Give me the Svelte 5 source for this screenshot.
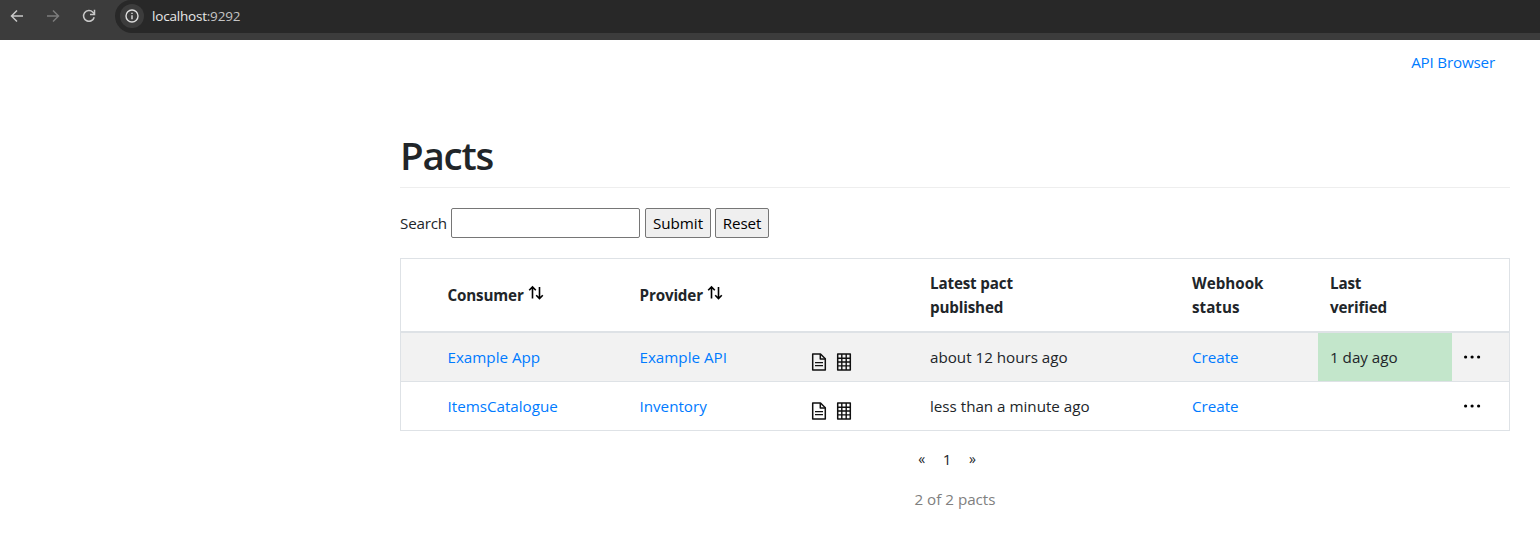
<script>
  const rows = [
    { consumer: 'Example App', provider: 'Example API', published: 'about 12 hours ago', verified: '1 day ago' },
    { consumer: 'ItemsCatalogue', provider: 'Inventory', published: 'less than a minute ago', verified: '' }
  ];
</script>

{#snippet sortIcon()}
  <svg class="sort" width="16" height="16" viewBox="0 0 16 16" fill="none" stroke="#000" stroke-width="1.6">
    <path d="M4.500 13.500V2.200M1.200 5.300 4.500 2l3.300 3.300M11.500 2v11.300M8.200 10.200l3.300 3.300 3.300-3.300" />
  </svg>
{/snippet}

<div class="browser">
  <svg class="nav back" width="14" height="14" viewBox="0 0 14 14"><path d="M13 7H1.800M7 1.500 1.500 7 7 12.500" /></svg>
  <svg class="nav forward" width="14" height="14" viewBox="0 0 14 14"><path d="M1 7h11.200M7 1.500 12.500 7 7 12.500" /></svg>
  <svg class="nav reload" width="14" height="14" viewBox="0 0 14 14">
    <path d="M12.200 8.200A5.400 5.400 0 1 1 10.900 3.200L12.300 4.600" /><path d="M12.500 .8V5.400H8" />
  </svg>
  <div class="address">
    <span class="info">
      <svg width="14" height="14" viewBox="0 0 14 14" fill="none" stroke="#dedede" stroke-width="1.4">
        <circle cx="7" cy="7" r="6" /><path d="M7 6.200v4M7 3.700v1.400" />
      </svg>
    </span>
    <span class="url">localhost<span class="port">:9292</span></span>
  </div>
</div>

<nav class="top"><a href="#api">API Browser</a></nav>

<main>
  <h1>Pacts</h1>
  <form onsubmit={(e) => e.preventDefault()}>
    <label for="search">Search</label>
    <input id="search" type="text" />
    <button class="submit" type="submit">Submit</button>
    <button class="reset" type="reset">Reset</button>
  </form>

  <table>
    <colgroup>
      <col class="c0" /><col class="c1" /><col class="c2" /><col class="c3" />
      <col class="c4" /><col class="c5" /><col class="c6" /><col class="c7" />
    </colgroup>
    <thead>
      <tr>
        <th></th>
        <th>Consumer {@render sortIcon()}</th>
        <th>Provider {@render sortIcon()}</th>
        <th></th>
        <th>Latest pact<br />published</th>
        <th class="webhook">Webhook<br />status</th>
        <th>Last<br />verified</th>
        <th></th>
      </tr>
    </thead>
    <tbody>
      {#each rows as row}
        <tr>
          <td></td>
          <td><a href="#consumer">{row.consumer}</a></td>
          <td><a href="#provider">{row.provider}</a></td>
          <td>
            <div class="icons">
              <svg width="16" height="18" viewBox="0 0 16 18" fill="none" stroke="#111" stroke-width="1.5" stroke-linejoin="round">
                <path d="M1.700 1H9.500L14.300 5.800V17H1.700Z" /><path d="M9.300 1V6H14.300" />
                <path d="M4 9.600h8M4 12.600h8" stroke-width="1.400" />
              </svg>
              <svg width="16" height="18" viewBox="0 0 16 18" fill="none" stroke="#111" stroke-width="1.5" stroke-linejoin="round">
                <path d="M1.700 1H14.300V17H1.700Z" /><path d="M5.800 1v16M10.200 1v16M1.700 5.200h12.600M1.700 9h12.600M1.700 12.900h12.600" stroke-width="1.400" />
              </svg>
            </div>
          </td>
          <td>{row.published}</td>
          <td><a href="#create">Create</a></td>
          <td class:success={row.verified}>{row.verified}</td>
          <td>
            <svg class="more" width="18" height="4" viewBox="0 0 18 4" fill="#000">
              <circle cx="1.600" cy="2" r="1.600" /><circle cx="8.100" cy="2" r="1.600" /><circle cx="14.600" cy="2" r="1.600" />
            </svg>
          </td>
        </tr>
      {/each}
    </tbody>
  </table>

  <div class="pages"><span class="step">«</span><span>1</span><span class="step">»</span></div>
  <div class="count">2 of 2 pacts</div>
</main>

<style>
  :global(body) {
    margin: 0;
    background: #fff;
    color: #212529;
    font: 15.200px/24px "Open Sans", "Noto Sans", sans-serif;
    letter-spacing: -0.01px;
    overflow: hidden;
  }
  a { color: #007bff; text-decoration: none; }
  .browser {
    display: flex;
    height: 40px;
    background: #3c3c3c;
  }
  .nav {
    flex: none;
    margin-top: 9px;
    fill: none;
    stroke: #c8c8c8;
    stroke-width: 1.500;
  }
  .back { margin-left: 10px; }
  .forward { margin-left: 22px; stroke: #7c7c7c; }
  .reload { margin-left: 22px; }
  .address {
    flex: 1;
    display: flex;
    align-items: flex-start;
    box-sizing: border-box;
    height: 33px;
    margin-left: 19px;
    padding: 4px 0 0 5px;
    border-radius: 16px 0 0 17px;
    background: #282828;
  }
  .info {
    display: flex;
    align-items: center;
    justify-content: center;
    width: 24px;
    height: 24px;
    border-radius: 50%;
    background: #3c3c3c;
  }
  .url { margin-left: 8px; color: #e8e8e8; font-size: 13.500px; letter-spacing: -0.200px; }
  .port { color: #c4c4c4; }
  .top { padding: 10px 45px 0 0; text-align: right; letter-spacing: -0.180px; }
  main { margin: 60px 30px 0 400px; }
  h1 {
    margin: 0 0 20px;
    height: 53px;
    border-bottom: 1px solid #eee;
    font-size: 38.500px;
    font-weight: 600;
    line-height: 42px;
    letter-spacing: -1.200px;
  }
  form { display: flex; align-items: center; height: 30px; margin-bottom: 20px; }
  input {
    box-sizing: border-box;
    width: 189px;
    height: 30px;
    padding: 0;
    border: 1px solid #767676;
    border-radius: 2px;
  }
  label { width: 51px; letter-spacing: -0.200px; }
  button {
    box-sizing: border-box;
    height: 30px;
    padding: 0;
    border: 1px solid #767676;
    border-radius: 2px;
    background: #efefef;
    color: #000;
    font: inherit;
  }
  .submit { width: 66px; margin-left: 5px; }
  .reset { width: 54px; margin-left: 4px; letter-spacing: -0.150px; }
  table {
    width: 1110px;
    table-layout: fixed;
    border: 1px solid #dee2e6;
    border-collapse: separate;
    border-spacing: 0;
  }
  .c0 { width: 34.500px; }
  .c1 { width: 192px; }
  .c2 { width: 171.500px; }
  .c3 { width: 119px; }
  .c4 { width: 262px; }
  .c5 { width: 138px; }
  .c6 { width: 134px; }
  .c7 { width: 57px; }
  th, td { padding: 12px 0 12px 12px; text-align: left; white-space: nowrap; }
  th { border-bottom: 2px solid #dee2e6; font-weight: 700; letter-spacing: -0.150px; }
  th.webhook { letter-spacing: 0; }
  td { height: 24px; border-bottom: 1px solid #dee2e6; }
  tbody tr:last-child td { border-bottom: 0; }
  tbody tr:first-child { background: #f2f2f2; }
  td.success { background: #c3e6cb; }
  .sort { margin-left: 0.500px; }
  .icons { display: flex; gap: 9px; padding-top: 8px; height: 16px; }
  .more { display: block; }
  .pages { display: flex; justify-content: center; gap: 17px; margin: 16px 16px 16px 0; }
  .step { width: 8px; font-size: 14px; text-align: center; }
  .count { text-align: center; color: #808080; }
</style>
